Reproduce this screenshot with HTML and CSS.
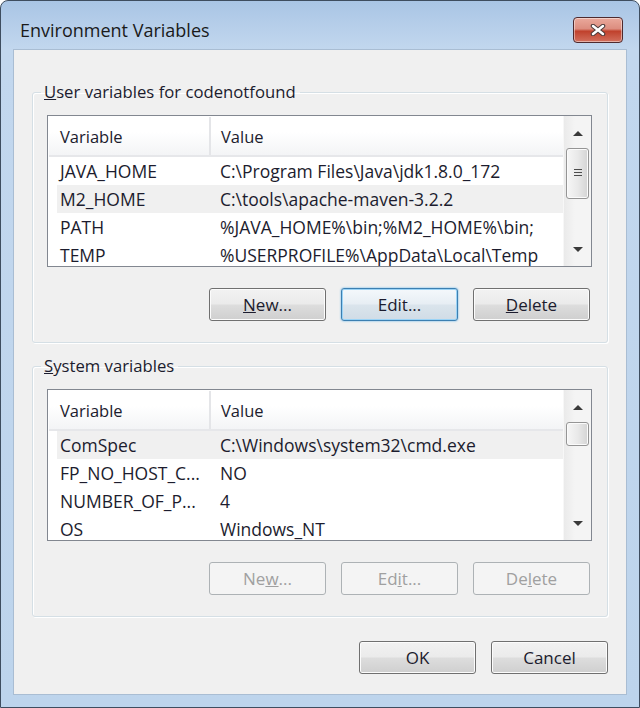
FILE: index.html
```html
<!DOCTYPE html>
<html lang="en">
<head>
    <meta charset="UTF-8">
    <title>Environment Variables</title>
    <link rel="stylesheet" href="styles.css">
</head>
<body>
    <div class="window">
        <div class="titlebar">
            <span class="title">Environment Variables</span>
            <span class="close">
                <svg width="20" height="12" viewBox="0 0 20 12">
                    <path d="M5 2 L15 10 M15 2 L5 10" stroke="#4a3a3a" stroke-width="4.5" stroke-linecap="round"/>
                    <path d="M5 2 L15 10 M15 2 L5 10" stroke="#ffffff" stroke-width="2.5" stroke-linecap="round"/>
                </svg>
            </span>
        </div>

        <div class="content">
            <fieldset class="group">
                <legend><u>U</u>ser variables for codenotfound</legend>
                <div class="listbox">
                    <div class="list">
                        <div class="head">
                            <span class="col1">Variable</span>
                            <span class="col2">Value</span>
                        </div>
                        <div class="row"><span class="col1">JAVA_HOME</span><span class="col2">C:\Program Files\Java\jdk1.8.0_172</span></div>
                        <div class="row shade"><span class="col1">M2_HOME</span><span class="col2">C:\tools\apache-maven-3.2.2</span></div>
                        <div class="row"><span class="col1">PATH</span><span class="col2">%JAVA_HOME%\bin;%M2_HOME%\bin;</span></div>
                        <div class="row"><span class="col1">TEMP</span><span class="col2">%USERPROFILE%\AppData\Local\Temp</span></div>
                    </div>
                    <div class="scrollbar">
                        <span class="arrow up"></span>
                        <div class="track">
                            <div class="thumb thumb-user"><span class="grip"></span></div>
                        </div>
                        <span class="arrow down"></span>
                    </div>
                </div>
                <div class="buttons">
                    <button class="btn"><u>N</u>ew...</button>
                    <button class="btn focus">Edit...</button>
                    <button class="btn"><u>D</u>elete</button>
                </div>
            </fieldset>

            <fieldset class="group second">
                <legend><u>S</u>ystem variables</legend>
                <div class="listbox">
                    <div class="list">
                        <div class="head">
                            <span class="col1">Variable</span>
                            <span class="col2">Value</span>
                        </div>
                        <div class="row shade"><span class="col1">ComSpec</span><span class="col2">C:\Windows\system32\cmd.exe</span></div>
                        <div class="row"><span class="col1">FP_NO_HOST_C...</span><span class="col2">NO</span></div>
                        <div class="row"><span class="col1">NUMBER_OF_P...</span><span class="col2">4</span></div>
                        <div class="row"><span class="col1">OS</span><span class="col2">Windows_NT</span></div>
                    </div>
                    <div class="scrollbar">
                        <span class="arrow up"></span>
                        <div class="track">
                            <div class="thumb thumb-sys"></div>
                        </div>
                        <span class="arrow down"></span>
                    </div>
                </div>
                <div class="buttons">
                    <button class="btn" disabled>Ne<u>w</u>...</button>
                    <button class="btn" disabled>Ed<u>i</u>t...</button>
                    <button class="btn" disabled>De<u>l</u>ete</button>
                </div>
            </fieldset>

            <div class="footer">
                <button class="btn">OK</button>
                <button class="btn">Cancel</button>
            </div>
        </div>
    </div>
</body>
</html>
```

FILE: styles.css
```css
*{
    margin: 0;
    padding: 0;
    box-sizing: border-box;
}
body{
    font-family: "Open Sans", "Noto Sans", sans-serif;
    font-size: 17.5px;
    color: #1c1c2e;
    background: #ffffff;
}
.window{
    width: 640px;
    height: 708px;
    border: 1px solid #3e4d5f;
    border-radius: 8px 8px 0 0;
    background: linear-gradient(#a9c5e5, #c2d7ee 48px, #bdd4ec);
    padding: 0 12px 12px 12px;
    display: flex;
    flex-direction: column;
}
.titlebar{
    height: 48px;
    display: flex;
    justify-content: space-between;
    align-items: flex-start;
}
.title{
    font-size: 18px;
    line-height: 24px;
    margin: 17px 0 0 7px;
    color: #1a1a1a;
}
.close{
    width: 50px;
    height: 26px;
    margin: 16px 4px 0 0;
    border: 1px solid #4e2a2e;
    border-radius: 4px;
    background: linear-gradient(#eaa99c, #dc8d7f 45%, #c0412c 55%, #d2705e);
    box-shadow: inset 0 0 0 1px rgba(255, 255, 255, 0.45);
    display: flex;
    justify-content: center;
    align-items: center;
}
.content{
    flex: 1;
    background-color: #f0f0f0;
    border: 1px solid #a9bdd3;
    padding: 31px 18px 19px 18px;
    display: flex;
    flex-direction: column;
}
.group{
    border: 1px solid #d5dfe5;
    box-shadow: 1px 1px 0 #ffffff, inset 1px 1px 0 #ffffff;
    border-radius: 3px;
    padding: 0 15px 21px 14px;
}
.group.second{
    margin-top: 12px;
}
.group legend{
    padding: 0 4px 0 3px;
    margin-left: -6px;
    font-size: 16.7px;
    line-height: 22px;
}
.listbox{
    height: 152px;
    border: 1px solid #828790;
    background-color: #ffffff;
    display: flex;
    margin-top: 12px;
}
.list{
    flex: 1;
    overflow: hidden;
    padding: 1px 0 0 1px;
}
.head{
    height: 40px;
    display: flex;
    align-items: center;
    font-size: 16.5px;
    background: linear-gradient(#ffffff 40%, #f3f4f6);
    border-bottom: 2px solid #e6e7ea;
}
.head .col1{
    width: 162px;
    padding-left: 11px;
    border-right: 2px solid #e4e5e8;
    align-self: stretch;
    display: flex;
    align-items: center;
}
.row{
    height: 28px;
    display: flex;
    align-items: center;
    margin-left: 8px;
}
.row .col1{
    width: 153px;
    padding-left: 3px;
    white-space: nowrap;
}
.col2{
    padding-left: 10px;
    white-space: nowrap;
}
.shade{
    background-color: #f0f0f0;
}
.scrollbar{
    width: 28px;
    background: linear-gradient(90deg, #eaeaea, #f4f4f4 40%, #f4f4f4);
    border-left: 1px solid #f7f7f7;
    display: flex;
    flex-direction: column;
    align-items: center;
}
.arrow{
    width: 0;
    height: 0;
    border-left: 5px solid transparent;
    border-right: 5px solid transparent;
    margin: 15px 0 12px;
}
.arrow.down{
    margin: 12px 0 14px;
    border-top: 5px solid #3a3a3a;
}
.arrow.up{
    border-bottom: 5px solid #3a3a3a;
}
.track{
    flex: 1;
    width: 100%;
    padding: 0 2px;
}
.thumb{
    border: 1px solid #959595;
    border-radius: 3px;
    background: linear-gradient(90deg, #f6f6f6, #e9e9e9 50%, #d4d4d4);
    box-shadow: inset 0 0 0 1px #fbfbfb;
    display: flex;
    justify-content: center;
    align-items: center;
}
.thumb-user{
    height: 51px;
}
.thumb-sys{
    height: 24px;
}
.grip{
    width: 8px;
    height: 9px;
    background: repeating-linear-gradient(#4c4c4c 0 1px, transparent 1px 3px);
}
.buttons{
    display: flex;
    justify-content: flex-end;
    gap: 15px;
    margin: 21px 2px 0 0;
}
.btn{
    width: 117px;
    height: 33px;
    font-family: inherit;
    font-size: 17px;
    color: #1c1c2e;
    border: 1px solid #707070;
    border-radius: 3px;
    background: linear-gradient(#f2f2f2, #ebebeb 48%, #dddddd 52%, #cfcfcf);
    box-shadow: inset 0 0 0 1px #fcfcfc;
}
.btn.focus{
    border-color: #3c7fb1;
    background: linear-gradient(#f4f8fb, #e7eef4 48%, #dae4ec 52%, #d0dce6);
    box-shadow: inset 0 0 0 1px #9ad3f6, 0 0 2px #48a8e8;
}
.btn:disabled{
    color: #a0a0a0;
    border-color: #adb2b5;
    background: #f4f4f4;
    box-shadow: none;
}
.footer{
    margin-top: 24px;
    display: flex;
    justify-content: flex-end;
    gap: 15px;
}
```
